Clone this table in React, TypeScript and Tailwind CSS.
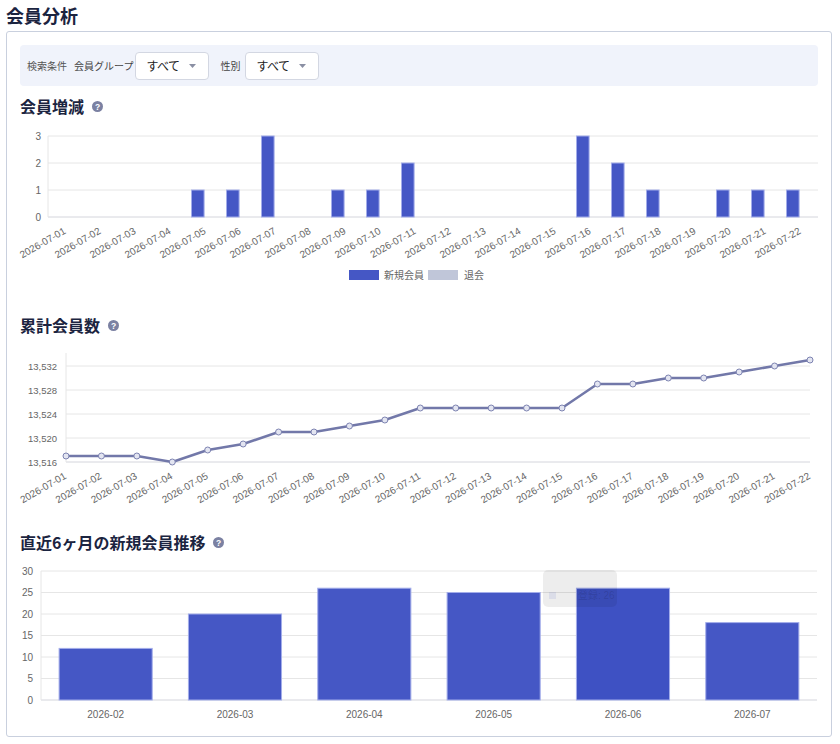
import React from 'react';

const dates = Array.from({ length: 22 }, (_, i) => `2026-07-${String(i + 1).padStart(2, '0')}`);
const newMembers = [0, 0, 0, 0, 1, 1, 3, 0, 1, 1, 2, 0, 0, 0, 0, 3, 2, 1, 0, 1, 1, 1];
const totals = [
  13517, 13517, 13517, 13516, 13518, 13519, 13521, 13521, 13522, 13523, 13525, 13525, 13525, 13525, 13525,
  13529, 13529, 13530, 13530, 13531, 13532, 13533,
];
const monthly: [string, number][] = [
  ['2026-02', 12],
  ['2026-03', 20],
  ['2026-04', 26],
  ['2026-05', 25],
  ['2026-06', 26],
  ['2026-07', 18],
];

const tickFont = '"Liberation Sans", "Noto Sans CJK JP", sans-serif';

const HelpIcon = () => (
  <svg width="11" height="11" viewBox="0 0 11 11">
    <circle cx="5.5" cy="5.5" r="5.5" fill="#7b81a2" />
    <text x="5.5" y="8.6" textAnchor="middle" fontSize="8.5" fontWeight="bold" fill="#fff" fontFamily={tickFont}>
      ?
    </text>
  </svg>
);

const Heading = ({ children }: { children: React.ReactNode }) => (
  <div className="flex items-center gap-2 h-6">
    <h2 className="text-[16px] font-bold leading-6 text-[#1b2440]">{children}</h2>
    <HelpIcon />
  </div>
);

const Select = () => (
  <div className="flex items-center w-[74px] h-[28px] bg-white border border-[#d3d7e2] rounded-[4px] pl-[10px]">
    <span className="text-[12px] tracking-[-0.5px] text-[#222] leading-none">すべて</span>
    <svg className="ml-[9px]" width="7" height="4" viewBox="0 0 7 4">
      <path d="M0 0h7L3.5 4z" fill="#8a8fa3" />
    </svg>
  </div>
);

// 会員増減
const ChangeChart = () => {
  const left = 28;
  const cw = 35;
  const base = 99;
  const y = (v: number) => base - v * 27;
  return (
    <svg width="798" height="195" className="block overflow-visible">
      {[1, 2, 3].map((v) => (
        <line key={v} x1={left} x2={left + cw * 22} y1={y(v)} y2={y(v)} stroke="#e6e6e6" />
      ))}
      <line x1={left} x2={left + cw * 22} y1={base} y2={base} stroke="#d4d5dc" />
      <line x1={left} x2={left} y1={y(3)} y2={base} stroke="#e6e6e6" />
      {[0, 1, 2, 3].map((v) => (
        <text key={v} x={21} y={y(v) + 3.5} textAnchor="end" fontSize="10" fill="#666" fontFamily={tickFont}>
          {v}
        </text>
      ))}
      {newMembers.map((v, i) =>
        v > 0 ? (
          <rect
            key={i}
            x={left + cw * i + 3.5}
            y={y(v)}
            width={12.6}
            height={v * 27}
            fill="#4557c5"
            stroke="#a3adea"
            strokeWidth="1"
          />
        ) : null
      )}
      {dates.map((d, i) => {
        const px = left + cw * i + cw / 2 + 1;
        const py = base + 16;
        return (
          <text
            key={d}
            x={px}
            y={py}
            textAnchor="end"
            fontSize="10"
            fill="#666"
            fontFamily={tickFont}
            transform={`rotate(-30 ${px} ${py})`}
          >
            {d}
          </text>
        );
      })}
      <rect x={329} y={152} width={30} height={10} fill="#4557c5" />
      <text x={364} y={161} fontSize="10" fill="#666" fontFamily={tickFont}>
        新規会員
      </text>
      <rect x={408} y={152} width={30} height={10} fill="#c0c6d9" />
      <text x={444} y={161} fontSize="10" fill="#666" fontFamily={tickFont}>
        退会
      </text>
    </svg>
  );
};

// 累計会員数
const TotalChart = () => {
  const left = 46;
  const right = 790;
  const step = (right - left) / 21;
  const base = 125;
  const y = (v: number) => base - (v - 13516) * 6;
  const pts = totals.map((v, i) => [left + step * i, y(v)]);
  return (
    <svg width="798" height="193" className="block overflow-visible">
      {[13520, 13524, 13528, 13532].map((v) => (
        <line key={v} x1={left} x2={right} y1={y(v)} y2={y(v)} stroke="#e6e6e6" />
      ))}
      <line x1={left} x2={right} y1={base} y2={base} stroke="#d4d5dc" />
      <line x1={left} x2={left} y1={16} y2={base} stroke="#e6e6e6" />
      {[13516, 13520, 13524, 13528, 13532].map((v) => (
        <text key={v} x={37} y={y(v) + 3.5} textAnchor="end" fontSize="9.5" fill="#666" fontFamily={tickFont}>
          {v.toLocaleString('en-US')}
        </text>
      ))}
      <polyline
        points={pts.map((p) => p.join(',')).join(' ')}
        fill="none"
        stroke="#7278a9"
        strokeWidth="2.5"
        strokeLinejoin="round"
      />
      {pts.map(([cx, cy], i) => (
        <circle key={i} cx={cx} cy={cy} r="3" fill="#e3e5f1" stroke="#7d83b1" strokeWidth="1" />
      ))}
      {dates.map((d, i) => {
        const px = left + step * i + 1;
        const py = base + 16;
        return (
          <text
            key={d}
            x={px}
            y={py}
            textAnchor="end"
            fontSize="10"
            fill="#666"
            fontFamily={tickFont}
            transform={`rotate(-30 ${px} ${py})`}
          >
            {d}
          </text>
        );
      })}
    </svg>
  );
};

// 直近6ヶ月の新規会員推移
const MonthlyChart = () => {
  const left = 21;
  const right = 797;
  const cw = (right - left) / 6;
  const base = 146;
  const y = (v: number) => base - v * 4.3;
  return (
    <svg width="798" height="171" className="block overflow-visible">
      {[5, 10, 15, 20, 25, 30].map((v) => (
        <line key={v} x1={left} x2={right} y1={y(v)} y2={y(v)} stroke="#e6e6e6" />
      ))}
      <line x1={left} x2={right} y1={base} y2={base} stroke="#d4d5dc" />
      <line x1={left} x2={left} y1={y(30)} y2={base} stroke="#e6e6e6" />
      {[0, 5, 10, 15, 20, 25, 30].map((v) => (
        <text key={v} x={13} y={y(v) + 3.5} textAnchor="end" fontSize="10" fill="#666" fontFamily={tickFont}>
          {v}
        </text>
      ))}
      {monthly.map(([m, v], i) => (
        <rect
          key={m}
          x={left + cw * i + 18.1}
          y={y(v)}
          width={93.1}
          height={v * 4.3}
          fill={i === 4 ? '#3e51c3' : '#4557c5'}
          stroke="#a3adea"
          strokeWidth="1"
        />
      ))}
      {monthly.map(([m], i) => (
        <text
          key={m}
          x={left + cw * (i + 0.5)}
          y={163.5}
          textAnchor="middle"
          fontSize="10"
          fill="#666"
          fontFamily={tickFont}
        >
          {m}
        </text>
      ))}
      <g>
        <rect x={523} y={16} width={74} height={37} rx={5} fill="#000" fillOpacity="0.07" />
        <rect x={529} y={38} width={7} height={7} fill="#4557c5" fillOpacity="0.1" />
        <text x={558} y={44.5} fontSize="10" fill="#000" fillOpacity="0.12" fontFamily={tickFont}>
          登録: 26
        </text>
      </g>
    </svg>
  );
};

const App = () => {
  return (
    <div className="w-[840px] min-h-[744px] bg-white font-['Noto_Sans_CJK_JP',sans-serif]">
      <h1 className="h-[31px] pl-[6px] text-[18px] font-bold leading-[30px] text-[#1b2440]">会員分析</h1>
      <div className="ml-[6px] w-[826px] border border-[#c9d0de] rounded-[3px] px-[13px] pt-[13px] pb-[11px]">
        <div className="flex items-center h-[41px] bg-[#f0f3fb] rounded-[4px] pl-[7px]">
          <span className="text-[10px] text-[#555]">検索条件</span>
          <span className="ml-[7px] text-[10px] text-[#444]">会員グループ</span>
          <div className="ml-[2px]">
            <Select />
          </div>
          <span className="ml-[11px] text-[10px] text-[#444]">性別</span>
          <div className="ml-[5px]">
            <Select />
          </div>
        </div>
        <div className="mt-2">
          <Heading>会員増減</Heading>
        </div>
        <ChangeChart />
        <Heading>累計会員数</Heading>
        <TotalChart />
        <Heading>直近6ヶ月の新規会員推移</Heading>
        <MonthlyChart />
      </div>
    </div>
  );
};

export default App;
